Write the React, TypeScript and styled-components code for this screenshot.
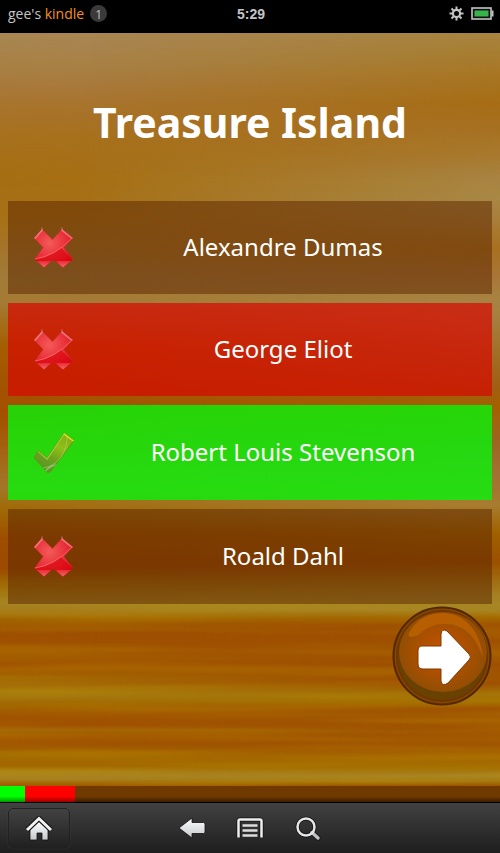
import React from "react";
import styled, { createGlobalStyle } from "styled-components";

const GlobalStyle = createGlobalStyle`
  * { box-sizing: border-box; }
  html, body, #root { height: 100%; margin: 0; }
  body { background: #000; }
  button { font: inherit; border: 0; padding: 0; background: none; color: inherit; cursor: pointer; }
  svg { display: block; }
`;

const Screen = styled.div`
  display: flex;
  flex-direction: column;
  min-height: 100vh;
  color: #fff;
  font-family: "Noto Sans", "Open Sans", sans-serif;
`;

const StatusBar = styled.header`
  display: grid;
  grid-template-columns: 1fr auto 1fr;
  align-items: center;
  height: 33px;
  padding: 0 6px 6px 8px;
  background: #000;
  color: #c4c4c4;
`;

const Owner = styled.div`
  display: flex;
  align-items: center;
  font-family: "Open Sans", sans-serif;
  font-size: 14px;
  line-height: 20px;
  white-space: pre;
`;

const Brand = styled.span`
  color: #f2931e;
`;

const Count = styled.span`
  display: grid;
  place-items: center;
  width: 17px;
  height: 17px;
  margin-left: 6px;
  border-radius: 50%;
  background: #3a3a3a;
  font-size: 12px;
`;

const Clock = styled.time`
  font-family: "Liberation Sans", sans-serif;
  font-size: 14px;
  line-height: 20px;
  font-weight: 700;
`;

const Indicators = styled.div`
  display: flex;
  justify-content: flex-end;
  align-items: center;
  gap: 7px;
`;

const Quiz = styled.main`
  position: relative;
  isolation: isolate;
  flex: 1;
  display: flex;
  flex-direction: column;
  background: linear-gradient(
    #a88653 0, #a88146 30px, #a87a3c 50px, #a8732c 75px, #a7701d 105px,
    #a66e13 145px, #a87018 185px, #a5742a 215px, #a17b39 245px, #a57a34 270px,
    #a66d1c 290px, #a55c00 315px, #a45300 350px, #a45000 380px, #a56414 420px,
    #a3772a 455px, #a06b08 475px, #9e4e00 505px, #9c4a00 535px, #a0700a 555px,
    #a78524 570px, #a57a18 579px, #a06000 587px, #9e5000 600px, #a05200 612px,
    #a45e00 625px, #a05200 633px, #a56c04 645px, #a57a10 663px, #a06400 672px,
    #a05200 684px, #a05000 692px, #a66e06 697px, #a05000 704px, #a15600 712px,
    #a57000 722px, #a26400 733px, #a8801c 739px, #a88420 746px, #a26000 751px, #9c5000 753px
  );
`;

const WoodRight = styled.div`
  position: absolute;
  inset: 0;
  z-index: -2;
  background: linear-gradient(
    #a8843e 0, #a77d30 20px, #a77420 45px, #a66c14 70px, #a77022 95px,
    #a7782e 120px, #a88444 145px, #a88848 165px, #a87f3c 185px, #a87020 215px,
    #a8763a 245px, #a78444 268px, #a67c3c 290px, #a06c24 325px, #a15e12 355px,
    #a56000 372px, #9e6420 405px, #a17034 440px, #a77c30 472px, #a06000 500px,
    #9c5000 530px, #a07014 550px, #a68426 565px, #a78524 577px, #a26400 585px,
    #9e5000 592px, #9e5000 650px, #a57408 661px, #a57202 669px, #a05600 675px,
    #9e5200 712px, #a46400 725px, #a57200 735px, #a78224 743px, #a57810 748px, #9c5400 753px
  );
  mask-image: linear-gradient(100deg, transparent 15%, #000 85%);
`;

const Grain = styled.svg`
  position: absolute;
  inset: 0;
  z-index: -1;
  width: 100%;
  height: 100%;
  mask-image: linear-gradient(rgba(0, 0, 0, 0.15) 70%, #000 82%);
`;

const Title = styled.h1`
  margin: 0;
  padding: 59px 8px 0;
  height: 168px;
  font-size: 41px;
  line-height: 60px;
  font-weight: 700;
  text-align: center;
`;

const Answers = styled.div`
  display: grid;
  grid-template-rows: repeat(2, minmax(93px, auto)) repeat(2, minmax(95px, auto));
  gap: 9px;
  padding: 0 8px;
`;

const tones = {
  plain: "rgba(90, 36, 0, 0.5)",
  wrong: "rgba(216, 5, 0, 0.68)",
  right: "rgba(5, 246, 10, 0.79)",
};

const Answer = styled.button<{ $tone: keyof typeof tones }>`
  display: flex;
  align-items: center;
  padding-left: 25px;
  background: ${(p) => tones[p.$tone]};
  font-size: 24px;
  line-height: 34px;
`;

const AnswerText = styled.span`
  flex: 1;
  padding-bottom: 1px;
  text-align: center;
`;

const NextRow = styled.div`
  display: flex;
  justify-content: flex-end;
  padding: 2px 8px 0;
`;

const Next = styled.button`
  width: 100px;
  height: 100px;
  border-radius: 50%;
`;

const Progress = styled.div`
  display: flex;
  height: 16px;
  background: linear-gradient(#703900 65%, #3c1e00);
`;

const Segment = styled.div<{ $color: string; $share: number }>`
  width: ${(p) => p.$share}%;
  background: linear-gradient(transparent 65%, rgba(0, 0, 0, 0.4)) ${(p) => p.$color};
`;

const NavBar = styled.nav`
  display: flex;
  align-items: center;
  height: 51px;
  padding: 0 8px;
  border-top: 1px solid #000;
  background: linear-gradient(#414141, #1e1e1e);
`;

const HomeButton = styled.button`
  display: grid;
  place-items: center;
  width: 62px;
  height: 41px;
  margin-right: 93px;
  border: 1px solid #222;
  border-radius: 5px;
  background: linear-gradient(#424242, #202020);
  box-shadow: 0 0 1px #5a5a5a;
`;

const NavButton = styled.button`
  display: grid;
  place-items: center;
  width: 58px;
  height: 41px;
`;

const crossPath =
  "M9 2 L19.500 12.500 L29 2 L40 11 L31 20.500 L40 32 L30 40.500 L20 32.500 L11 40.500 L1.500 32 L10 20.500 L1 11 Z";

function Cross({ id }: { id: string }) {
  return (
    <svg width="41" height="42" viewBox="0 0 41 42" aria-label="Wrong">
      <defs>
        <radialGradient id={`${id}-fill`} cx="0.4" cy="0.36" r="0.7">
          <stop offset="0" stopColor="#f45a58" />
          <stop offset="0.6" stopColor="#e8303a" />
          <stop offset="1" stopColor="#dc1018" />
        </radialGradient>
        <linearGradient id={`${id}-foot`} x1="0" y1="0" x2="0" y2="1">
          <stop offset="0" stopColor="#ea2c34" />
          <stop offset="1" stopColor="#f4747a" />
        </linearGradient>
        <clipPath id={`${id}-clip`}><path d={crossPath} /></clipPath>
      </defs>
      <path d={crossPath} fill={`url(#${id}-fill)`} stroke="#b42c2c" strokeOpacity="0.5" strokeWidth="1" strokeLinejoin="round" />
      <g clipPath={`url(#${id}-clip)`}>
        <path d="M2 33 Q22 29 38 12 L28 21 L40 33 V42 H0Z" fill="#d80008" opacity="0.6" />
        <path d="M2 34 H18 L11 42Z M23 34 H39 L30 42Z" fill={`url(#${id}-foot)`} />
        <path d="M2 32 Q22 29 38 12" fill="none" stroke="#ff7c78" strokeOpacity="0.65" strokeWidth="1" />
        <path d="M1 12 L9 3 M29 3 L40 12" fill="none" stroke="#f4a09c" strokeOpacity="0.6" strokeWidth="2" />
      </g>
      <path d="M9 0.500V4M29 0.500V4" stroke="#d0b8b0" strokeOpacity="0.6" strokeWidth="1" />
    </svg>
  );
}

const checkPath = "M5 18.500 L14 26 L31 1 L41 8.500 L18 39 L15 41 L1 26 Z";

function Check() {
  return (
    <svg width="41" height="42" viewBox="0 0 41 42" aria-label="Right">
      <defs>
        <linearGradient id="check-fill" x1="0.3" y1="1" x2="0.8" y2="0">
          <stop offset="0" stopColor="#55942a" />
          <stop offset="0.35" stopColor="#6ca31c" />
          <stop offset="0.65" stopColor="#8fbf18" />
          <stop offset="1" stopColor="#80ae14" />
        </linearGradient>
        <clipPath id="check-clip"><path d={checkPath} /></clipPath>
      </defs>
      <path d={checkPath} fill="url(#check-fill)" stroke="#629c18" strokeWidth="1" strokeLinejoin="round" />
      <g clipPath="url(#check-clip)" fill="none">
        <path d="M5 19 L14 27 L31 2" stroke="#b4d040" strokeOpacity="0.7" strokeWidth="1.500" />
        <path d="M31 1 L41 8.500" stroke="#dce024" strokeWidth="3" />
        <path d="M34 5 C34 20 25 34 10 36" stroke="#b4d470" strokeOpacity="0.6" strokeWidth="1" />
        <path d="M23 33 Q16 34 12 40" stroke="#a4d088" strokeOpacity="0.7" strokeWidth="1.500" />
      </g>
    </svg>
  );
}

function NextIcon() {
  return (
    <svg width="100" height="100" viewBox="0 0 100 100" aria-hidden="true">
      <defs>
        <radialGradient id="orb">
          <stop offset="0" stopColor="#c45600" />
          <stop offset="0.5" stopColor="#ae5000" />
          <stop offset="1" stopColor="#924e04" />
        </radialGradient>
      </defs>
      <circle cx="50" cy="50" r="48.500" fill="#884500" stroke="#512800" strokeWidth="2" />
      <circle cx="50" cy="50" r="45" fill="#694100" stroke="#703600" strokeWidth="2" />
      <ellipse cx="51" cy="46" rx="44" ry="40" fill="url(#orb)" />
      <path d="M17 27 C25 12 38 7 51 7 C74 7 89 27 91 52 C84 29 70 17 51 18 C38 18 32 25 26 29 C19 32 15 31 17 27Z" fill="#b65e00" />
      <path d="M30 40 H49 V28 Q50 22 55 25 L77 48 Q80 51 77 54 L56 77 Q50 81 49 75 V63 H31 Q26 63 26 58 V45 Q26 40 30 40Z" fill="#fff" stroke="#843800" strokeWidth="1" />
    </svg>
  );
}

const answers: { name: string; tone: keyof typeof tones }[] = [
  { name: "Alexandre Dumas", tone: "plain" },
  { name: "George Eliot", tone: "wrong" },
  { name: "Robert Louis Stevenson", tone: "right" },
  { name: "Roald Dahl", tone: "plain" },
];

export default function App() {
  return (
    <Screen>
      <GlobalStyle />
      <StatusBar>
        <Owner>
          gee's <Brand>kindle</Brand>
          <Count>1</Count>
        </Owner>
        <Clock>5:29</Clock>
        <Indicators>
          <svg width="15" height="15" viewBox="0 0 15 15" aria-label="Settings">
            <circle cx="7.500" cy="7.500" r="3.600" fill="none" stroke="#c4c4c4" strokeWidth="2.200" />
            <path d="M7.500 0.500V3M7.500 12V14.500M0.500 7.500H3M12 7.500H14.500M2.500 2.500L4.500 4.500M10.500 10.500L12.500 12.500M2.500 12.500L4.500 10.500M10.500 4.500L12.500 2.500" stroke="#c4c4c4" strokeWidth="2" />
          </svg>
          <svg width="23" height="13" viewBox="0 0 23 13" aria-label="Battery">
            <rect x="1" y="1" width="19" height="11" fill="#111" stroke="#c4c4c4" strokeWidth="1.600" />
            <rect x="3.500" y="3.500" width="14" height="6" fill="#38b54a" />
            <rect x="20.500" y="3.500" width="2" height="6" fill="#c4c4c4" />
          </svg>
        </Indicators>
      </StatusBar>

      <Quiz>
        <WoodRight />
        <Grain aria-hidden="true">
          <filter id="grain" x="0" y="0" width="100%" height="100%">
            <feTurbulence type="fractalNoise" baseFrequency="0.003 0.09" numOctaves="2" seed="4" />
            <feColorMatrix values="0 0 0 0 0.67  0 0 0 0 0.48  0 0 0 0 0  2 0 0 0 -0.8" />
          </filter>
          <rect width="100%" height="100%" filter="url(#grain)" opacity="0.22" />
        </Grain>
        <Title>Treasure Island</Title>
        <Answers>
          {answers.map((a, i) => (
            <Answer key={a.name} type="button" $tone={a.tone}>
              {a.tone === "right" ? <Check /> : <Cross id={`cross-${i}`} />}
              <AnswerText>{a.name}</AnswerText>
            </Answer>
          ))}
        </Answers>
        <NextRow>
          <Next type="button" aria-label="Next question">
            <NextIcon />
          </Next>
        </NextRow>
      </Quiz>

      <Progress role="img" aria-label="Quiz progress">
        <Segment $color="#0f0" $share={5} />
        <Segment $color="#f00" $share={10} />
      </Progress>

      <NavBar>
        <HomeButton type="button" aria-label="Home">
          <svg width="28" height="25" viewBox="0 0 28 25">
            <linearGradient id="silver" x1="0" y1="0" x2="0" y2="1">
              <stop offset="0" stopColor="#fff" />
              <stop offset="1" stopColor="#c6c8ca" />
            </linearGradient>
            <path d="M5 14 L14 5.500 L23 14 V24 H17 V17 H12 V24 H5Z" fill="url(#silver)" stroke="#111" strokeWidth="0.800" />
            <path d="M2 14 L14 2.500 L26 14" fill="none" stroke="#111" strokeWidth="5" />
            <path d="M2 14 L14 2.500 L26 14" fill="none" stroke="#f2f2f2" strokeWidth="3" />
          </svg>
        </HomeButton>
        <NavButton type="button" aria-label="Back">
          <svg width="28" height="22" viewBox="0 0 28 22">
            <path d="M1 11 L14 1 V5.500 H25.500 Q27 5.500 27 7 V15 Q27 16.500 25.500 16.500 H14 V21Z" fill="url(#silver)" stroke="#111" strokeWidth="0.800" />
          </svg>
        </NavButton>
        <NavButton type="button" aria-label="Menu">
          <svg width="28" height="22" viewBox="0 0 28 22" fill="none" stroke="#111" strokeWidth="4">
            <path d="M2.500 20.500 V4 Q2.500 2.500 4 2.500 H24 Q25.500 2.500 25.500 4 V20.500" />
            <path d="M2.500 20.500 V4 Q2.500 2.500 4 2.500 H24 Q25.500 2.500 25.500 4 V20.500" stroke="#eee" strokeWidth="2.500" />
            <path d="M6.500 8.500H21.500M6.500 13.500H21.500M6.500 18.500H21.500" stroke="#ddd" strokeWidth="2.500" />
          </svg>
        </NavButton>
        <NavButton type="button" aria-label="Search">
          <svg width="26" height="25" viewBox="0 0 26 25" fill="none" strokeLinecap="round">
            <path d="M17 16.500 L23 22" stroke="#111" strokeWidth="5" />
            <circle cx="11" cy="11" r="8.500" stroke="#111" strokeWidth="4" />
            <path d="M17 16.500 L23 22" stroke="#bfc1c3" strokeWidth="3.500" />
            <circle cx="11" cy="11" r="8.500" stroke="#e6e6e6" strokeWidth="2.500" />
          </svg>
        </NavButton>
      </NavBar>
    </Screen>
  );
}
